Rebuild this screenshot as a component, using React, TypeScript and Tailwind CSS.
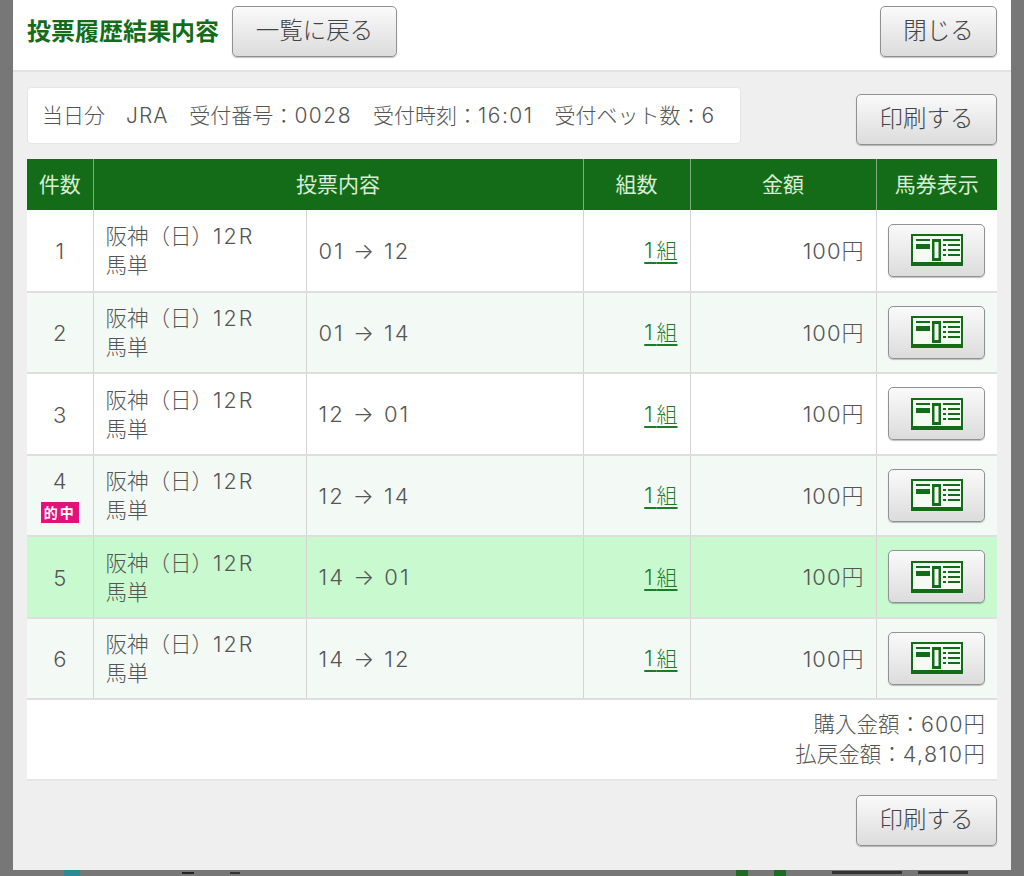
const font = { fontFamily: 'Inter, "Noto Sans CJK JP", "Noto Sans", sans-serif' };

const btn =
  "flex items-center justify-center rounded-[5px] border border-[#8f9294] bg-gradient-to-b from-[#fafafa] to-[#dcdcdc] text-[#444] shadow-[0_1px_1px_rgba(0,0,0,0.25)]";

function TicketIcon() {
  return (
    <svg width="52" height="32" viewBox="0 0 52 32" aria-hidden="true">
      <rect x="1" y="1" width="50" height="30" fill="#f4fbf2" stroke="#146c18" strokeWidth="2" />
      <rect x="1" y="28" width="50" height="3" fill="#146c18" />
      <rect x="5" y="5" width="14" height="2" fill="#146c18" />
      <rect x="5" y="10" width="14" height="5" fill="#146c18" />
      <rect x="21" y="5" width="9" height="22" fill="#146c18" />
      <rect x="23.5" y="8" width="4" height="16" fill="#f4fbf2" />
      <rect x="32" y="5" width="17" height="2" fill="#146c18" />
      <rect x="32" y="10" width="3" height="2" fill="#146c18" />
      <rect x="37" y="10" width="12" height="2" fill="#146c18" />
      <rect x="32" y="15" width="3" height="2" fill="#146c18" />
      <rect x="37" y="15" width="12" height="2" fill="#146c18" />
      <rect x="32" y="20" width="3" height="2" fill="#146c18" />
      <rect x="37" y="20" width="12" height="2" fill="#146c18" />
    </svg>
  );
}

const rows = [
  { n: 1, bet: "01 → 12", bg: "bg-white" },
  { n: 2, bet: "01 → 14", bg: "bg-[#f3faf6]" },
  { n: 3, bet: "12 → 01", bg: "bg-white" },
  { n: 4, bet: "12 → 14", bg: "bg-[#f3faf6]", hit: true },
  { n: 5, bet: "14 → 01", bg: "bg-[#c8f9cf]" },
  { n: 6, bet: "14 → 12", bg: "bg-[#f3faf6]" },
];

const th = "border-l border-[#7fae80] first:border-l-0 font-normal text-[21px] text-[#d9ecd6] text-center";
const td = "border-l border-[#d4d4d4] first:border-l-0 align-middle";

export default function App() {
  return (
    <div className="relative w-[1024px] h-[876px] overflow-hidden bg-[#777777] font-light" style={font}>
      <div className="absolute left-0 right-0 bottom-0 h-[6px] flex items-start gap-[6px] pl-[64px] overflow-hidden">
        <div className="w-[16px] h-[6px] bg-[#2a8a96]" />
        <div className="w-[12px] h-[2px] ml-[96px] mt-[2px] bg-[#222]" />
        <div className="w-[10px] h-[2px] ml-[30px] mt-[2px] bg-[#333]" />
        <div className="w-[12px] h-[6px] ml-[490px] bg-[#1d6b24]" />
        <div className="w-[12px] h-[6px] ml-[20px] bg-[#1d6b24]" />
        <div className="w-[70px] h-[3px] ml-[40px] mt-[1px] bg-[#333]" />
        <div className="w-[50px] h-[3px] ml-[10px] mt-[1px] bg-[#333]" />
      </div>
      <div className="ml-[13px] w-[998px] h-[870px] bg-[#efefef] flex flex-col">
        <header className="h-[72px] shrink-0 bg-white border-b-2 border-[#e2e2e2] pl-[14px] pr-[14px] pt-[6px] flex items-start">
          <h1 className="mt-[10px] text-[24px] leading-[32px] font-bold text-[#146c18] w-[205px]">投票履歴結果内容</h1>
          <button className={btn + " w-[165px] h-[51px] text-[23.5px] pb-[2px]"}>一覧に戻る</button>
          <button className={btn + " ml-auto w-[117px] h-[51px] text-[23.5px] pb-[2px]"}>閉じる</button>
        </header>
        <main className="flex-1 px-[14px] pt-[15px]">
          <div className="flex items-start justify-between h-[72px]">
            <div className="w-[714px] h-[57px] rounded-[4px] bg-white border border-[#e6e6e6] pl-[14px] flex items-center text-[21px] text-[#555] whitespace-pre">
              <span>
                当日分　<span className="tracking-[1px]">JRA</span>　受付番号：
                <span className="tracking-[1.5px]">0028</span>　受付時刻：
                <span className="tracking-[1.5px]">16:01</span>　受付ベット数：6
              </span>
            </div>
            <button className={btn + " mt-[7px] w-[141px] h-[51px] text-[23.5px] pb-[2px]"}>印刷する</button>
          </div>
          <table className="w-[970px] table-fixed border-collapse text-[#555]">
            <colgroup>
              <col className="w-[66px]" />
              <col className="w-[213px]" />
              <col className="w-[277px]" />
              <col className="w-[107px]" />
              <col className="w-[186px]" />
              <col className="w-[121px]" />
            </colgroup>
            <thead>
              <tr className="h-[51px] bg-[#146c18]">
                <th className={th}>件数</th>
                <th className={th} colSpan={2}>投票内容</th>
                <th className={th}>組数</th>
                <th className={th}>金額</th>
                <th className={th}>馬券表示</th>
              </tr>
            </thead>
            <tbody>
              {rows.map((r) => (
                <tr key={r.n} className={"h-[81.5px] border-b-2 border-[#dedede] " + r.bg}>
                  <td className={td + " text-center text-[22px] " + (r.hit ? "" : "pt-[2px]")}>
                    <div className="leading-[28px]">{r.n}</div>
                    {r.hit && (
                      <div className="mx-auto mt-[7px] w-[38px] h-[21px] bg-[#e2127a] text-white text-[14px] leading-[21px] font-bold tracking-[2px]">
                        的中
                      </div>
                    )}
                  </td>
                  <td className={td + " pl-[12px] text-[21.5px] leading-[29px] pt-[2px]"}>
                    阪神（日）<span className="tracking-[2px]">12R</span>
                    <br />
                    馬単
                  </td>
                  <td className={td + " pl-[12px] text-[22px] tracking-[2px] pt-[2px]"}>{r.bet}</td>
                  <td className={td + " pr-[12px] text-right text-[21px] pt-[1px]"}>
                    <a className="text-[#1f7a2a] underline underline-offset-4">
                      <span className="tracking-[4px]">1</span>組
                    </a>
                  </td>
                  <td className={td + " pr-[12px] text-right text-[22px] pt-[2px]"}>
                    <span className="tracking-[1px]">100</span>円
                  </td>
                  <td className={td}>
                    <button className={btn + " mx-auto w-[97px] h-[53px]"}>
                      <TicketIcon />
                    </button>
                  </td>
                </tr>
              ))}
            </tbody>
          </table>
          <div className="w-[970px] h-[81px] bg-white border-b-2 border-[#e6e6e6] pr-[12px] pt-[9px] text-right text-[21.5px] leading-[30px] text-[#555]">
            <div>
              購入金額：<span className="tracking-[1px]">600</span>円
            </div>
            <div>
              払戻金額：<span className="tracking-[1.5px]">4,810</span>円
            </div>
          </div>
          <div className="flex justify-end mt-[14px]">
            <button className={btn + " w-[141px] h-[51px] text-[23.5px] pb-[2px]"}>印刷する</button>
          </div>
        </main>
      </div>
    </div>
  );
}
